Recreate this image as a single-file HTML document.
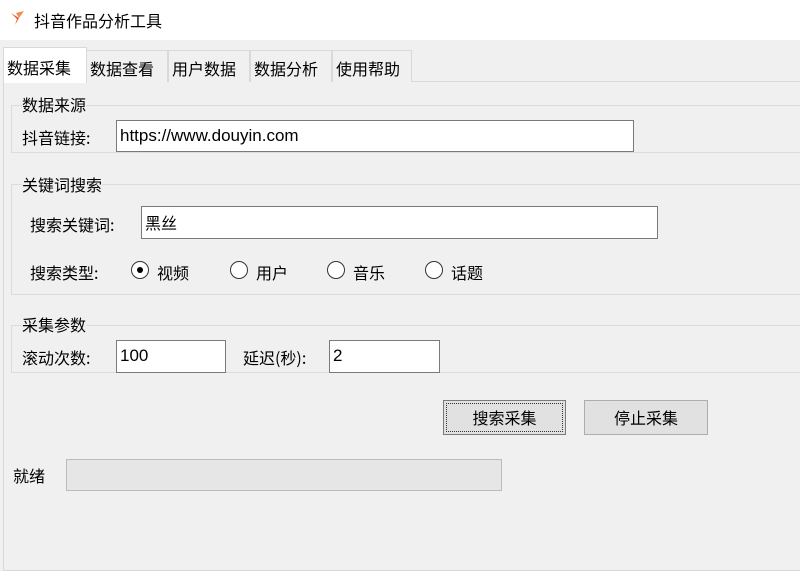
<!DOCTYPE html>
<html><head><meta charset="utf-8"><style>
*{box-sizing:border-box;margin:0;padding:0}
body{width:800px;height:564px;background:#f0f0f0;font-family:"Microsoft YaHei","Noto Sans CJK SC","Liberation Sans",sans-serif;font-size:16px;color:#000;position:relative;overflow:hidden}
.a{position:absolute}
.title{left:0;top:0;width:800px;height:40px;background:#fff}
.inp{position:absolute;background:#fff;border:1px solid #7a7a7a;font-family:"Liberation Sans","Noto Sans CJK SC",sans-serif;font-size:17px;padding-left:3px;line-height:30px}
.grp{position:absolute;border:1px solid #dcdcdc;border-right:none}
.lbl{position:absolute;background:#f0f0f0;white-space:nowrap}
.tab{position:absolute;top:50px;height:32px;border:1px solid #d9d9d9;border-bottom:none;background:#f0f0f0;padding:5px 3px 0;font-size:16px}
.rad{position:absolute;width:18px;height:18px;border:1px solid #333;border-radius:50%;background:#fff}
.btn{position:absolute;height:35px;border:1px solid #adadad;background:#e1e1e1;text-align:center;line-height:33px;font-size:16px}
</style></head><body>
<div class="a title"></div>
<svg class="a" style="left:9px;top:9px" width="18" height="18" viewBox="0 0 18 18"><path d="M2 4 L10 9 L6 16 L8 10 Z" fill="#e4572e"/><path d="M7 4 L15 2 L10 9 Z" fill="#f28b4b"/></svg>
<div class="a" style="left:34px;top:8px;font-size:16px">抖音作品分析工具</div>
<div class="a" style="left:3px;top:81px;width:800px;height:490px;border:1px solid #d9d9d9;background:#f0f0f0"></div>
<div class="tab" style="left:86px;width:82px">数据查看</div>
<div class="tab" style="left:168px;width:82px">用户数据</div>
<div class="tab" style="left:250px;width:82px">数据分析</div>
<div class="tab" style="left:332px;width:80px">使用帮助</div>
<div class="tab" style="left:3px;top:47px;width:84px;height:36px;background:#fff;padding-top:7px;border-color:#d9d9d9">数据采集</div>

<div class="grp" style="left:11px;top:105px;width:789px;height:48px"></div>
<div class="lbl" style="left:22px;top:92px">数据来源</div>
<div class="lbl" style="left:22px;top:125px">抖音链接:</div>
<div class="inp" style="left:116px;top:120px;width:518px;height:32px">https://www.douyin.com</div>

<div class="grp" style="left:11px;top:184px;width:789px;height:111px"></div>
<div class="lbl" style="left:22px;top:172px">关键词搜索</div>
<div class="lbl" style="left:30px;top:212px">搜索关键词:</div>
<div class="inp" style="left:141px;top:206px;width:517px;height:33px;font-family:'Noto Sans CJK SC',sans-serif;font-size:16px">黑丝</div>
<div class="lbl" style="left:30px;top:260px">搜索类型:</div>
<div class="rad" style="left:131px;top:261px"><div class="a" style="left:5px;top:5px;width:6px;height:6px;border-radius:50%;background:#000"></div></div>
<div class="lbl" style="left:157px;top:260px">视频</div>
<div class="rad" style="left:230px;top:261px"></div>
<div class="lbl" style="left:256px;top:260px">用户</div>
<div class="rad" style="left:327px;top:261px"></div>
<div class="lbl" style="left:353px;top:260px">音乐</div>
<div class="rad" style="left:425px;top:261px"></div>
<div class="lbl" style="left:451px;top:260px">话题</div>

<div class="grp" style="left:11px;top:325px;width:789px;height:48px"></div>
<div class="lbl" style="left:22px;top:312px">采集参数</div>
<div class="lbl" style="left:22px;top:345px">滚动次数:</div>
<div class="inp" style="left:116px;top:340px;width:110px;height:33px">100</div>
<div class="lbl" style="left:243px;top:345px">延迟(秒):</div>
<div class="inp" style="left:329px;top:340px;width:111px;height:33px">2</div>

<div class="btn" style="left:443px;top:400px;width:123px;border-color:#7a7a7a"><div class="a" style="left:2px;top:2px;right:2px;bottom:2px;border:1px dotted #333"></div>搜索采集</div>
<div class="btn" style="left:584px;top:400px;width:124px">停止采集</div>

<div class="lbl" style="left:13px;top:463px">就绪</div>
<div class="a" style="left:66px;top:459px;width:436px;height:32px;border:1px solid #bcbcbc;background:#e6e6e6"></div>
</body></html>
